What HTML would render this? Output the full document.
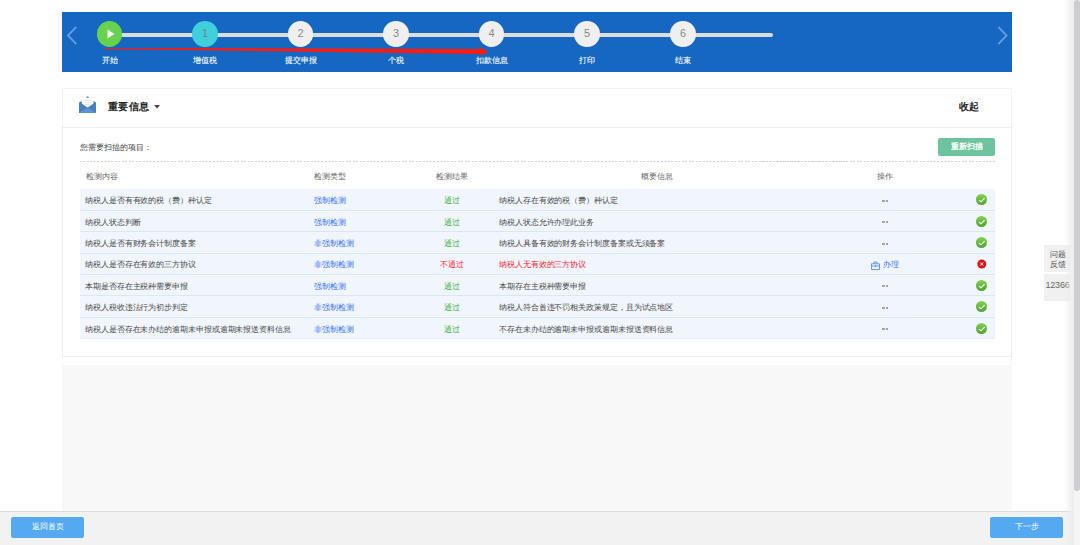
<!DOCTYPE html>
<html><head><meta charset="utf-8">
<style>
*{box-sizing:border-box;margin:0;padding:0}
html,body{width:1080px;height:545px;overflow:hidden;background:#fff;font-family:"Liberation Sans",sans-serif;}
.abs{position:absolute}
#hdr{left:62px;top:12px;width:950px;height:60px;background:#1567c1;}
.line{position:absolute;left:47px;top:21.4px;width:664px;height:3.2px;background:#dcdcdc;border-radius:2px}
.circ{position:absolute;width:25.6px;height:25.6px;border-radius:50%;background:#efefef;top:9.1px;color:#888;font-size:11px;line-height:25.6px;text-align:center}
.lbl{position:absolute;top:44px;width:80px;text-align:center;color:#fff;font-size:8px;line-height:10px;font-weight:400;-webkit-text-stroke:0.1px #fff}
#card{left:62px;top:88px;width:950px;height:269px;border:1px solid #f3f3f3;background:#fff}
.sep{left:63px;top:127px;width:948px;height:1px;background:#f0f0f0}
.txt{position:absolute;white-space:nowrap;font-size:8px;line-height:10px}
.row{position:absolute;left:80px;width:915px;height:21.5px;background:#eef4fd;border-bottom:1px solid #d9e8fa}
.rt{position:absolute;height:20px;line-height:20px;font-size:8px;letter-spacing:-0.08px;white-space:nowrap;color:#4a4a4a}
.blue{color:#3872f2}
.green{color:#40ad38}
.red{color:#f5222d}
#grey{left:62px;top:365px;width:950px;height:146px;background:#f8f8f8}
#bbar{left:0;top:511px;width:1074px;height:34px;background:#f2f2f2;border-top:1px solid #dcdcdc}
.btn{position:absolute;top:5.2px;width:73px;height:20.6px;background:#55a9f0;border-radius:2px;color:#fff;font-size:8px;line-height:20.6px;text-align:center}
</style></head>
<body>
<div id="hdr" class="abs">
  <svg class="abs" style="left:0;top:0" width="950" height="60">
    <polyline points="14.3,14.8 6,23.5 14.3,32.2" fill="none" stroke="#5f9ee2" stroke-width="1.9"/>
    <polyline points="936.3,14.8 944.6,23.5 936.3,32.2" fill="none" stroke="#5f9ee2" stroke-width="1.9"/>
  </svg>
  <div class="line"></div>
  <div class="circ" style="left:34.7px;background:#66d24e"></div>
  <svg class="abs" style="left:34.5px;top:9px" width="26" height="26"><polygon points="10.5,8.5 10.5,17.5 17.5,13" fill="#fff"/></svg>
  <div class="circ" style="left:130.2px;background:#40d0dc;color:#7a7a8a">1</div>
  <div class="circ" style="left:225.7px">2</div>
  <div class="circ" style="left:321.2px">3</div>
  <div class="circ" style="left:416.7px">4</div>
  <div class="circ" style="left:512.2px">5</div>
  <div class="circ" style="left:608.2px">6</div>
  <div class="lbl" style="left:7.5px">开始</div>
  <div class="lbl" style="left:103px">增值税</div>
  <div class="lbl" style="left:198.5px">提交申报</div>
  <div class="lbl" style="left:294px">个税</div>
  <div class="lbl" style="left:389.5px">扣款信息</div>
  <div class="lbl" style="left:485px">打印</div>
  <div class="lbl" style="left:581px">结束</div>
  <svg class="abs" style="left:0;top:0" width="950" height="60">
    <polygon points="42,35.9 418,36.9 417.5,34.9 426.5,39.9 417.5,43.6 418,41.9 42,37" fill="#fb1c10"/>
  </svg>
</div>

<div class="abs" style="left:62px;top:357px;width:950px;height:9px;border:1px solid #f7f7f7;border-top:0"></div>
<div id="card" class="abs"></div>
<div class="abs" style="left:62px;top:127px;width:950px;height:230px;border:1px solid #ebebeb;border-top:0;border-bottom-color:#f1f1f1"></div>
<div class="abs sep"></div>
<svg class="abs" style="left:79px;top:96px" width="18" height="18">
  <rect x="2.8" y="2" width="12.2" height="10" fill="#fcfdff"/>
  <path d="M4.5,4.5 h8 M4.5,6.5 h8 M5.5,8.5 h6" stroke="#dce8f5" stroke-width="0.8"/>
  <ellipse cx="8.6" cy="1.2" rx="1.3" ry="0.8" fill="#4a7fbf"/>
  <polygon points="0,6.5 2.8,5 2.8,7.5 8.5,11.8 14.5,7.5 14.5,5 17,6.5 17,17 0,17" fill="#4a7fbf"/>
  <polygon points="0,17 8.5,11.2 17,17" fill="#5b93d1"/>
</svg>
<div class="txt abs" style="left:108px;top:101px;font-size:10.3px;letter-spacing:0.35px;line-height:12px;font-weight:bold;color:#222">重要信息</div>
<svg class="abs" style="left:154px;top:105px" width="6" height="4"><polygon points="0,0 6,0 3,3.5" fill="#444"/></svg>
<div class="txt abs" style="left:959px;top:101px;font-size:9.5px;line-height:12px;font-weight:bold;color:#222">收起</div>

<div class="txt abs" style="left:80px;top:143px;color:#444">您需要扫描的项目：</div>
<div class="abs" style="left:938px;top:138px;width:57px;height:18px;background:#6dc39d;border-radius:2px;color:#fff;font-weight:bold;font-size:8px;line-height:18px;text-align:center">重新扫描</div>
<div class="abs" style="left:80px;top:161px;width:915px;height:1px;background:repeating-linear-gradient(to right,#d4d4d4 0 2px,transparent 2px 3.5px)"></div>

<div class="txt abs" style="left:86px;top:171.8px;color:#666">检测内容</div>
<div class="txt abs" style="left:314px;top:171.8px;color:#666">检测类型</div>
<div class="txt abs" style="left:436px;top:171.8px;color:#666">检测结果</div>
<div class="txt abs" style="left:641px;top:171.8px;color:#666">概要信息</div>
<div class="txt abs" style="left:877px;top:171.8px;color:#666">操作</div>

<!--rows-->
<div class="abs" style="left:80px;top:188.8px;width:915px;height:150.4px;background:#f0f5fe"></div>
<div class="abs" style="left:80px;top:210.10px;width:915px;height:1px;background:#d8e7fa"></div>
<div class="abs" style="left:80px;top:231.40px;width:915px;height:1px;background:#d8e7fa"></div>
<div class="abs" style="left:80px;top:252.70px;width:915px;height:1px;background:#d8e7fa"></div>
<div class="abs" style="left:80px;top:274.00px;width:915px;height:1px;background:#d8e7fa"></div>
<div class="abs" style="left:80px;top:295.30px;width:915px;height:1px;background:#d8e7fa"></div>
<div class="abs" style="left:80px;top:316.60px;width:915px;height:1px;background:#d8e7fa"></div>
<div class="abs" style="left:80px;top:338.20px;width:915px;height:1px;background:#e6effb"></div>
<div class="rt" style="left:85px;top:191.30px">纳税人是否有有效的税（费）种认定</div>
<div class="rt blue" style="left:314px;top:191.30px">强制检测</div>
<div class="rt green" style="left:372px;top:191.30px;width:160px;text-align:center">通过</div>
<div class="rt" style="left:499px;top:191.30px">纳税人存在有效的税（费）种认定</div>
<div class="abs" style="left:882.2px;top:199.90px;width:2.6px;height:2px;background:#a6a6a6"></div><div class="abs" style="left:885.8px;top:199.90px;width:2.4px;height:2px;background:#a6a6a6"></div>
<svg class="abs" style="left:976px;top:194.20px" width="11" height="11"><defs><linearGradient id="g0" x1="0" y1="0" x2="0" y2="1"><stop offset="0" stop-color="#86d052"/><stop offset="1" stop-color="#4ba52a"/></linearGradient></defs><circle cx="5.5" cy="5.5" r="5.5" fill="url(#g0)"/><path d="M2.9,6.1 L5,7.8 L8.6,4.1" fill="none" stroke="#fff" stroke-width="1.1"/></svg>
<div class="rt" style="left:85px;top:212.85px">纳税人状态判断</div>
<div class="rt blue" style="left:314px;top:212.85px">强制检测</div>
<div class="rt green" style="left:372px;top:212.85px;width:160px;text-align:center">通过</div>
<div class="rt" style="left:499px;top:212.85px">纳税人状态允许办理此业务</div>
<div class="abs" style="left:882.2px;top:221.45px;width:2.6px;height:2px;background:#a6a6a6"></div><div class="abs" style="left:885.8px;top:221.45px;width:2.4px;height:2px;background:#a6a6a6"></div>
<svg class="abs" style="left:976px;top:215.75px" width="11" height="11"><defs><linearGradient id="g1" x1="0" y1="0" x2="0" y2="1"><stop offset="0" stop-color="#86d052"/><stop offset="1" stop-color="#4ba52a"/></linearGradient></defs><circle cx="5.5" cy="5.5" r="5.5" fill="url(#g1)"/><path d="M2.9,6.1 L5,7.8 L8.6,4.1" fill="none" stroke="#fff" stroke-width="1.1"/></svg>
<div class="rt" style="left:85px;top:234.15px">纳税人是否有财务会计制度备案</div>
<div class="rt blue" style="left:314px;top:234.15px">非强制检测</div>
<div class="rt green" style="left:372px;top:234.15px;width:160px;text-align:center">通过</div>
<div class="rt" style="left:499px;top:234.15px">纳税人具备有效的财务会计制度备案或无须备案</div>
<div class="abs" style="left:882.2px;top:242.75px;width:2.6px;height:2px;background:#a6a6a6"></div><div class="abs" style="left:885.8px;top:242.75px;width:2.4px;height:2px;background:#a6a6a6"></div>
<svg class="abs" style="left:976px;top:237.05px" width="11" height="11"><defs><linearGradient id="g2" x1="0" y1="0" x2="0" y2="1"><stop offset="0" stop-color="#86d052"/><stop offset="1" stop-color="#4ba52a"/></linearGradient></defs><circle cx="5.5" cy="5.5" r="5.5" fill="url(#g2)"/><path d="M2.9,6.1 L5,7.8 L8.6,4.1" fill="none" stroke="#fff" stroke-width="1.1"/></svg>
<div class="rt" style="left:85px;top:255.45px">纳税人是否存在有效的三方协议</div>
<div class="rt blue" style="left:314px;top:255.45px">非强制检测</div>
<div class="rt red" style="left:372px;top:255.45px;width:160px;text-align:center">不通过</div>
<div class="rt red" style="left:499px;top:255.45px">纳税人无有效的三方协议</div>
<div class="rt blue" style="left:830px;top:255.45px;width:110px;text-align:center"><svg width="9" height="9" style="vertical-align:-2.3px;margin-right:3px"><path d="M0.5,2.8 h8 v5.7 h-8z M3,2.8 v-1.8 h3 v1.8 M0.5,5 h8 M4.5,4.2 v1.8" fill="none" stroke="#5b8ef0" stroke-width="0.9"/></svg>办理</div>
<svg class="abs" style="left:977px;top:258.85px" width="10" height="10"><circle cx="4.8" cy="5" r="4.5" fill="#d9141e"/><path d="M3.3,3.5 L6.3,6.5 M6.3,3.5 L3.3,6.5" stroke="#fff" stroke-width="1"/></svg>
<div class="rt" style="left:85px;top:276.75px">本期是否存在主税种需要申报</div>
<div class="rt blue" style="left:314px;top:276.75px">强制检测</div>
<div class="rt green" style="left:372px;top:276.75px;width:160px;text-align:center">通过</div>
<div class="rt" style="left:499px;top:276.75px">本期存在主税种需要申报</div>
<div class="abs" style="left:882.2px;top:285.35px;width:2.6px;height:2px;background:#a6a6a6"></div><div class="abs" style="left:885.8px;top:285.35px;width:2.4px;height:2px;background:#a6a6a6"></div>
<svg class="abs" style="left:976px;top:279.65px" width="11" height="11"><defs><linearGradient id="g4" x1="0" y1="0" x2="0" y2="1"><stop offset="0" stop-color="#86d052"/><stop offset="1" stop-color="#4ba52a"/></linearGradient></defs><circle cx="5.5" cy="5.5" r="5.5" fill="url(#g4)"/><path d="M2.9,6.1 L5,7.8 L8.6,4.1" fill="none" stroke="#fff" stroke-width="1.1"/></svg>
<div class="rt" style="left:85px;top:298.05px">纳税人税收违法行为初步判定</div>
<div class="rt blue" style="left:314px;top:298.05px">非强制检测</div>
<div class="rt green" style="left:372px;top:298.05px;width:160px;text-align:center">通过</div>
<div class="rt" style="left:499px;top:298.05px">纳税人符合首违不罚相关政策规定，且为试点地区</div>
<div class="abs" style="left:882.2px;top:306.65px;width:2.6px;height:2px;background:#a6a6a6"></div><div class="abs" style="left:885.8px;top:306.65px;width:2.4px;height:2px;background:#a6a6a6"></div>
<svg class="abs" style="left:976px;top:300.95px" width="11" height="11"><defs><linearGradient id="g5" x1="0" y1="0" x2="0" y2="1"><stop offset="0" stop-color="#86d052"/><stop offset="1" stop-color="#4ba52a"/></linearGradient></defs><circle cx="5.5" cy="5.5" r="5.5" fill="url(#g5)"/><path d="M2.9,6.1 L5,7.8 L8.6,4.1" fill="none" stroke="#fff" stroke-width="1.1"/></svg>
<div class="rt" style="left:85px;top:319.75px">纳税人是否存在未办结的逾期未申报或逾期未报送资料信息</div>
<div class="rt blue" style="left:314px;top:319.75px">非强制检测</div>
<div class="rt green" style="left:372px;top:319.75px;width:160px;text-align:center">通过</div>
<div class="rt" style="left:499px;top:319.75px">不存在未办结的逾期未申报或逾期未报送资料信息</div>
<div class="abs" style="left:882.2px;top:328.35px;width:2.6px;height:2px;background:#a6a6a6"></div><div class="abs" style="left:885.8px;top:328.35px;width:2.4px;height:2px;background:#a6a6a6"></div>
<svg class="abs" style="left:976px;top:322.65px" width="11" height="11"><defs><linearGradient id="g6" x1="0" y1="0" x2="0" y2="1"><stop offset="0" stop-color="#86d052"/><stop offset="1" stop-color="#4ba52a"/></linearGradient></defs><circle cx="5.5" cy="5.5" r="5.5" fill="url(#g6)"/><path d="M2.9,6.1 L5,7.8 L8.6,4.1" fill="none" stroke="#fff" stroke-width="1.1"/></svg>
<!--/rows-->

<div id="grey" class="abs"></div>
<div id="bbar" class="abs">
  <div class="btn" style="left:11px">返回首页</div>
  <div class="btn" style="left:990px">下一步</div>
</div>
<div class="abs" style="left:1044px;top:245px;width:27px;height:27px;background:#f0f0f0;color:#555;font-size:8px;line-height:10.8px;text-align:center;padding-top:4.5px">问题<br>反馈</div>
<div class="abs" style="left:1044px;top:274px;width:27px;height:26.5px;background:#f0f0f0;color:#666;font-size:9px;line-height:10px;text-align:center;padding-top:5.5px;letter-spacing:-0.2px">12366</div>
<div class="abs" style="left:1064px;top:0;width:10px;height:545px;background:linear-gradient(to right,rgba(240,240,240,0),#ececec)"></div>
<div class="abs" style="left:1074px;top:0;width:6px;height:545px;background:#f5f5f5"></div>
<div class="abs" style="left:1074.2px;top:0;width:5.8px;height:490.5px;background:#cdcdd0;border-radius:3px"></div>
</body></html>
